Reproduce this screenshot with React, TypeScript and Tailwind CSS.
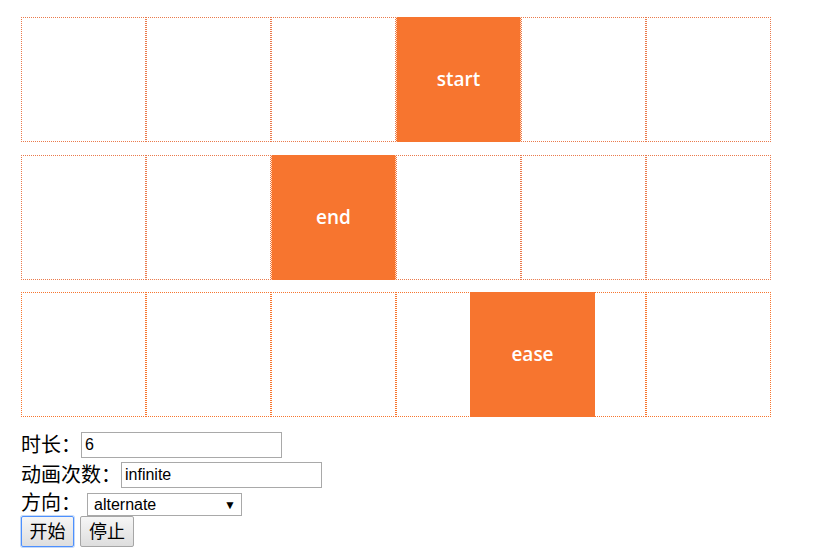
const orange = 'bg-[#f7752f]';

type Row = { label: string; left: number; edge: string; snapped: boolean };

const rows: Row[] = [
  { label: 'start', left: 375, edge: 'border-[#ea7a4c]', snapped: true },
  { label: 'end', left: 250, edge: 'border-[#ea7a4c]', snapped: true },
  { label: 'ease', left: 449, edge: 'border-[#f7762f]', snapped: false },
];

function Track({ row }: { row: Row }) {
  const cells = [0, 1, 2, 3, 4, 5];
  return (
    <div className="relative flex w-[750px] h-[125px]">
      {cells.map((i) => (
        <div key={i} className={`w-[125px] h-[125px] border border-dotted ${row.edge}`} />
      ))}
      <div
        className={`absolute top-0 w-[125px] h-[125px] ${orange} flex items-center justify-center text-white text-[19px] font-semibold ${
          row.snapped ? 'border-x border-dotted border-x-[#fbd9c6]' : ''
        }`}
        style={{ left: row.left, fontFamily: '"Open Sans", "Noto Sans", sans-serif' }}
      >
        {row.label}
      </div>
    </div>
  );
}

export default function App() {
  const cjk = { fontFamily: '"Liberation Sans", "Noto Sans CJK SC", sans-serif' };
  return (
    <div className="w-[816px] h-[559px] bg-white pl-[21px] pt-[17px] text-black" style={cjk}>
      <div className="flex flex-col gap-[12px]">
        <Track row={rows[0]} />
        <div className="mt-[1px]">
          <Track row={rows[1]} />
        </div>
        <Track row={rows[2]} />
      </div>

      <div className="mt-[13px] flex flex-col">
        <div className="flex items-center h-[30px]">
          <span className="text-[20px] leading-[26px] w-[60px]">时长：</span>
          <div className="w-[201px] h-[26px] border border-[#a9a9a9] flex items-center pl-[3px] text-[16px]">6</div>
        </div>
        <div className="flex items-center h-[30px]">
          <span className="text-[20px] leading-[26px] w-[100px]">动画次数：</span>
          <div className="w-[201px] h-[26px] border border-[#a9a9a9] flex items-center pl-[3px] text-[16px]">infinite</div>
        </div>
        <div className="flex items-end h-[26px]">
          <span className="text-[20px] leading-[26px] w-[66px]">方向：</span>
          <div className="w-[155px] h-[23px] border border-[#a9a9a9] flex items-center justify-between pl-[6px] pr-[5px] text-[16px]">
            <span>alternate</span>
            <span className="text-[12px]">▼</span>
          </div>
        </div>
        <div className="flex gap-[6px] mt-0">
          <button className="w-[53px] h-[31px] rounded-[2px] border border-[#4d90fe] shadow-[0_0_0_1px_#c5d9f7] bg-gradient-to-b from-[#f6f6f6] to-[#dedede] text-[18px] leading-none">
            开始
          </button>
          <button className="w-[54px] h-[31px] rounded-[2px] border border-[#a6a6a6] bg-gradient-to-b from-[#f6f6f6] to-[#dedede] text-[18px] leading-none">
            停止
          </button>
        </div>
      </div>
    </div>
  );
}
